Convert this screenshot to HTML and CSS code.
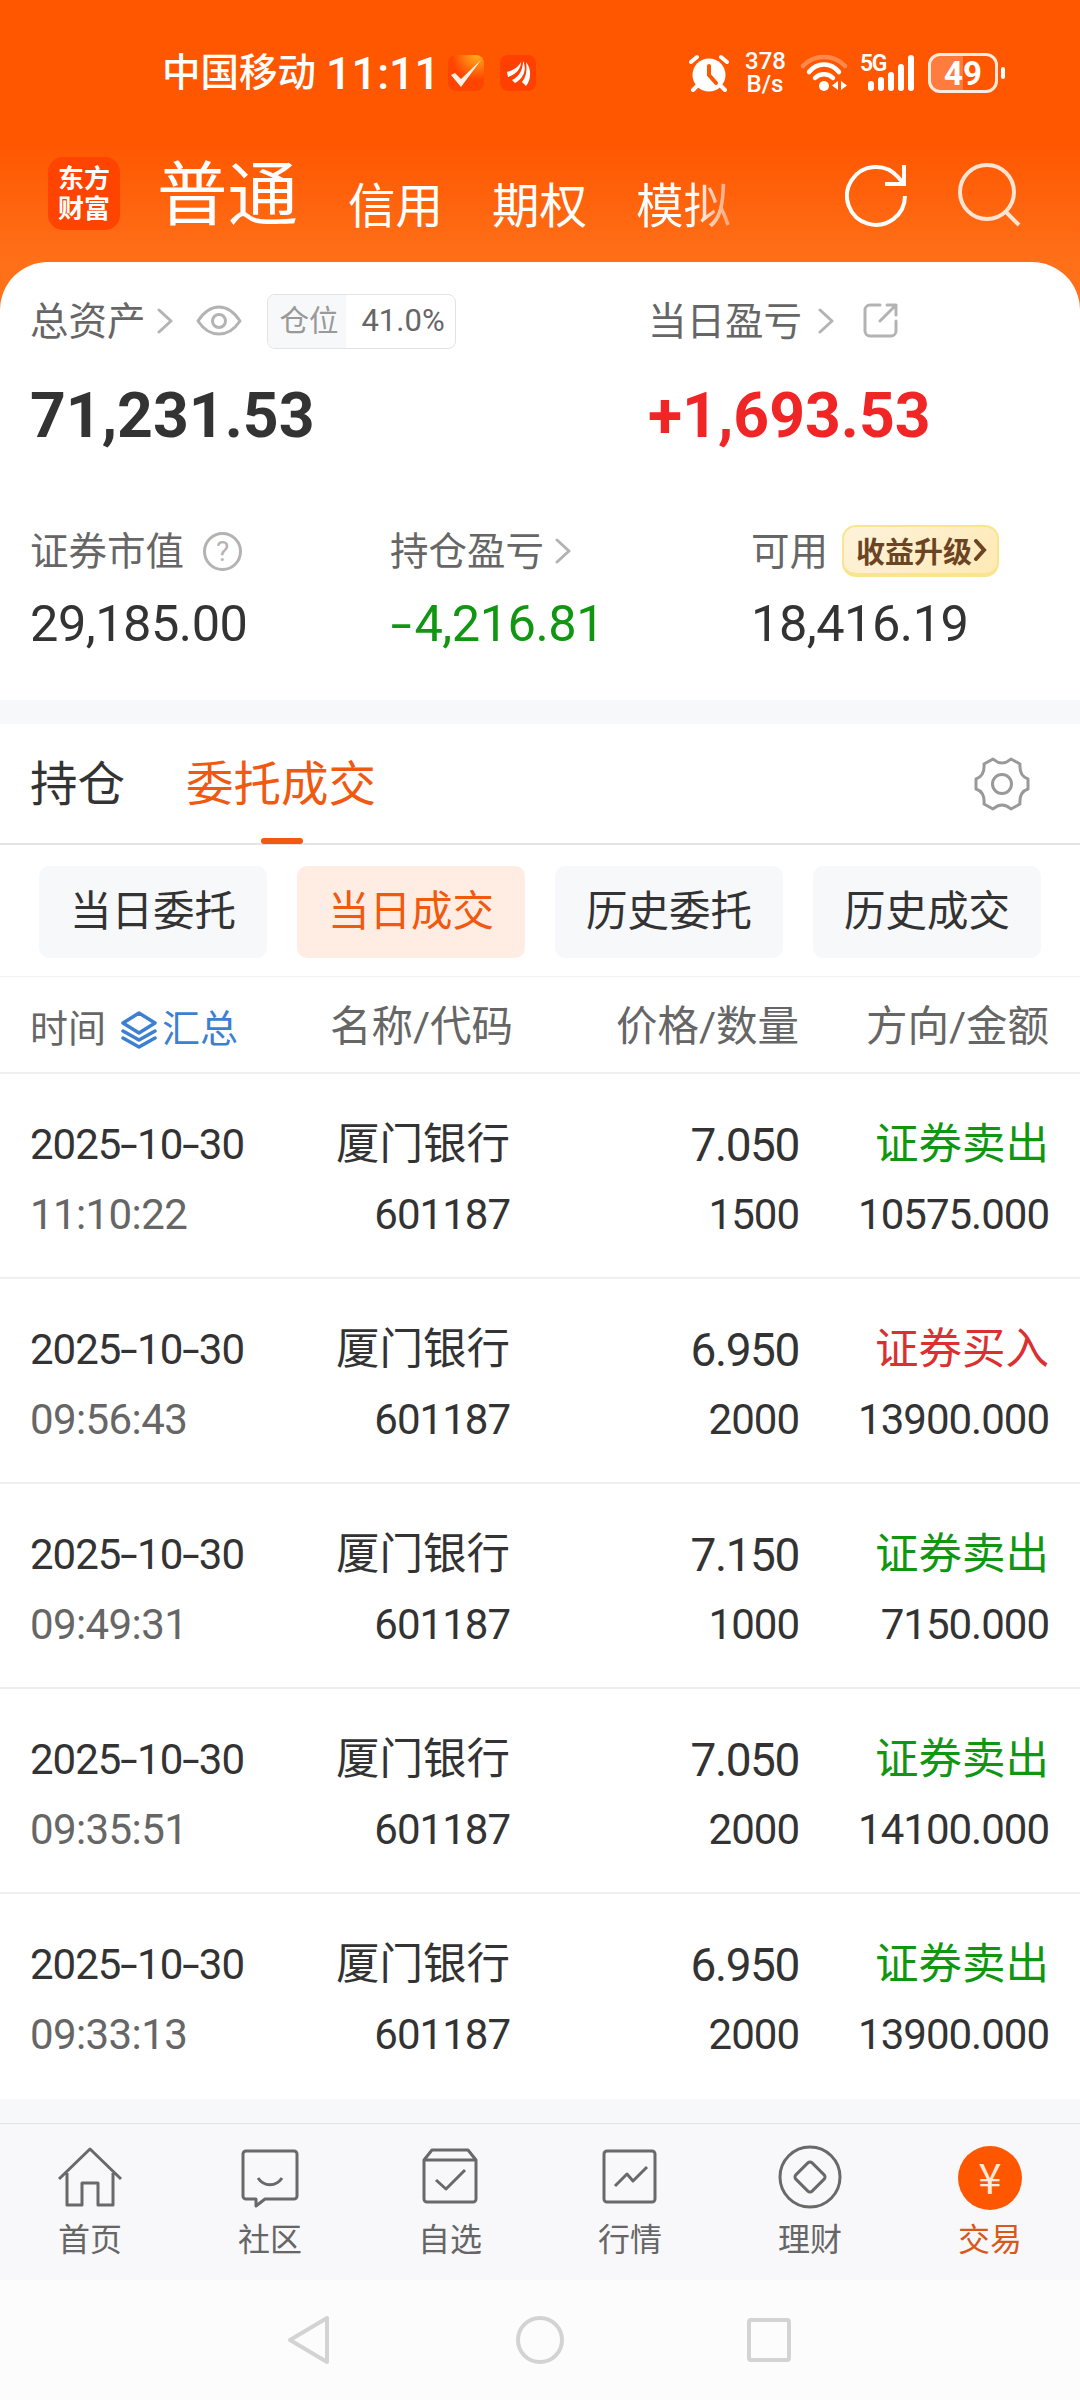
FILE: index.html
```html
<!DOCTYPE html>
<html lang="zh-CN">
  <head>
    <meta charset="UTF-8" />
    <meta name="viewport" content="width=device-width, initial-scale=1.0" />
    <title>交易</title>
    <link rel="stylesheet" href="styles.css">
  </head>
  <body>
    <div class="top">
      <div class="status">
        <span class="carrier">中国移动</span>
        <span class="clock">11:11</span>
        <svg class="app-check" width="36" height="36" viewBox="0 0 36 36">
          <defs>
            <radialGradient id="glow" cx="0.8" cy="0" r="0.7">
              <stop offset="0" stop-color="#ffb01c" />
              <stop offset="1" stop-color="#ff4400" />
            </radialGradient>
          </defs>
          <rect width="36" height="36" rx="8" fill="url(#glow)" />
          <path d="M3 20l4-2 6 6L33 5 13 32z" fill="#fff0e8" />
        </svg>
        <svg class="app-wing" width="36" height="36" viewBox="0 0 36 36">
          <rect width="36" height="36" rx="8" fill="#ff4000" />
          <path d="M7 17C14 15 18 12 21 7c0 6-4 12-13 15zM12 25C19 22 23 15 23 6c4 8 1 17-8 22zM22 27c5-6 5-14 4-20 6 7 5 18 0 24z" fill="#fff" />
        </svg>
        <span class="space"></span>
        <svg class="alarm" width="40" height="38" viewBox="0 0 40 38">
          <circle cx="20" cy="21" r="16.500" fill="#fff" />
          <path d="M2 8l6-5M38 8l-6-5M8 32l-4 4M32 32l4 4" stroke="#fff" stroke-width="4" stroke-linecap="round" />
          <path d="M20 12v9l7 8" fill="none" stroke="#ff5600" stroke-width="4" stroke-linecap="round" />
        </svg>
        <div class="speed"><p>378</p><p>B/s</p></div>
        <svg class="wifi" width="48" height="38" viewBox="0 0 48 38">
          <g fill="none" stroke="#fff" stroke-width="4.500" stroke-linecap="round">
            <path d="M3 12c11-12 31-12 42 0" opacity="0.300" />
            <path d="M9 18c8-10 22-10 30 0" />
            <path d="M15 24c5-5 13-5 18 0" />
          </g>
          <circle cx="24" cy="32" r="5" fill="#fff" />
          <path d="M38 27v9l-6-4.500zM41 27v9l6-4.500z" fill="#fff" />
        </svg>
        <div class="signal">
          <span>5G</span>
          <svg width="54" height="38" viewBox="0 0 54 38">
            <path d="M11 30v4M21 26v8M31 21v13M41 13v21M51 4v30" stroke="#fff" stroke-width="6" stroke-linecap="round" />
          </svg>
        </div>
        <div class="battery"><span>49</span></div>
        <i class="nub"></i>
      </div>

      <div class="nav">
        <div class="logo">东方<br>财富</div>
        <span class="current">普通</span>
        <span class="mode credit">信用</span>
        <span class="mode option">期权</span>
        <span class="mode mock">模拟</span>
        <span class="space"></span>
        <svg class="refresh" width="64" height="66" viewBox="0 0 64 66" fill="none" stroke="#fff" stroke-width="4">
          <path d="M60 34a29 29 0 1 1-7-19l6 7" />
          <path d="M59 3v19H40" />
        </svg>
        <svg width="64" height="66" viewBox="0 0 64 66" fill="none" stroke="#ffe3d3" stroke-width="4">
          <circle cx="29" cy="30" r="27" />
          <path d="M47 49l14 14" />
        </svg>
      </div>
    </div>

    <div class="assets">
      <div class="totals">
        <div class="total">
          <div class="label">
            总资产
            <svg class="arrow" width="16" height="26" viewBox="0 0 16 26"><path d="M2 2l12 11L2 24" /></svg>
            <svg class="eye" width="46" height="34" viewBox="0 0 46 34">
              <path d="M2 17C8 8 15 3 23 3s15 5 21 14c-6 9-13 13-21 13S8 26 2 17z" />
              <circle cx="23" cy="17" r="6.500" />
            </svg>
            <div class="position"><span>仓位</span><b>41.0%</b></div>
          </div>
          <div class="sum">71,231.53</div>
        </div>
        <div class="total">
          <div class="label">
            当日盈亏
            <svg class="arrow far" width="16" height="26" viewBox="0 0 16 26"><path d="M2 2l12 11L2 24" /></svg>
            <svg class="share" width="36" height="36" viewBox="0 0 36 36">
              <path d="M17 2H7a5 5 0 0 0-5 5v21a5 5 0 0 0 5 5h21a5 5 0 0 0 5-5V18M24 2h9v10M33 2L17 18" />
            </svg>
          </div>
          <div class="sum red">+1,693.53</div>
        </div>
      </div>

      <div class="figures">
        <div class="figure">
          <div class="label">证券市值<span class="help">?</span></div>
          <div class="value">29,185.00</div>
        </div>
        <div class="figure">
          <div class="label">
            持仓盈亏
            <svg class="arrow" width="16" height="26" viewBox="0 0 16 26"><path d="M2 2l12 11L2 24" /></svg>
          </div>
          <div class="value green"><i class="dash">-</i>4,216.81</div>
        </div>
        <div class="figure">
          <div class="label">
            可用
            <div class="upgrade">
              收益升级
              <svg width="14" height="22" viewBox="0 0 14 22"><path d="M3 2l8 9-8 9" fill="none" stroke="#6b4423" stroke-width="4" stroke-linecap="round" /></svg>
            </div>
          </div>
          <div class="value">18,416.19</div>
        </div>
      </div>
    </div>

    <div class="orders">
      <div class="tabs">
        <span class="tab">持仓</span>
        <span class="tab active">委托成交</span>
        <svg class="gear" width="58" height="58" viewBox="0 0 58 58" fill="none" stroke="#999" stroke-width="3" stroke-linejoin="round">
          <path d="M20 4q9 8 18 0l9 5q-1 12 8 15v10q-9 3-8 15l-9 5q-9-8-18 0l-9-5q1-12-8-15V24q9-3 8-15z" />
          <circle cx="29" cy="29" r="9.500" />
        </svg>
      </div>

      <div class="filters">
        <span>当日委托</span>
        <span class="active">当日成交</span>
        <span>历史委托</span>
        <span>历史成交</span>
      </div>

      <div class="row head">
        <div class="when">
          时间
          <svg width="38" height="40" viewBox="0 0 38 40" fill="none" stroke="#3d7fd1" stroke-width="3.500" stroke-linejoin="round" stroke-linecap="round">
            <path d="M19 3l16 10-16 10L3 13zM3 21l16 9 16-9M3 28l16 9 16-9" />
          </svg>
          <span>汇总</span>
        </div>
        <div class="code">名称/代码</div>
        <div>价格/数量</div>
        <div>方向/金额</div>
      </div>

      <div class="row">
        <div><p class="date">2025<i class="dash">-</i>10<i class="dash">-</i>30</p><p class="time">11:10:22</p></div>
        <div><p class="name">厦门银行</p><p>601187</p></div>
        <div><p class="price">7.050</p><p>1500</p></div>
        <div><p class="name green">证券卖出</p><p>10575.000</p></div>
      </div>
      <div class="row">
        <div><p class="date">2025<i class="dash">-</i>10<i class="dash">-</i>30</p><p class="time">09:56:43</p></div>
        <div><p class="name">厦门银行</p><p>601187</p></div>
        <div><p class="price">6.950</p><p>2000</p></div>
        <div><p class="name buy">证券买入</p><p>13900.000</p></div>
      </div>
      <div class="row">
        <div><p class="date">2025<i class="dash">-</i>10<i class="dash">-</i>30</p><p class="time">09:49:31</p></div>
        <div><p class="name">厦门银行</p><p>601187</p></div>
        <div><p class="price">7.150</p><p>1000</p></div>
        <div><p class="name green">证券卖出</p><p>7150.000</p></div>
      </div>
      <div class="row">
        <div><p class="date">2025<i class="dash">-</i>10<i class="dash">-</i>30</p><p class="time">09:35:51</p></div>
        <div><p class="name">厦门银行</p><p>601187</p></div>
        <div><p class="price">7.050</p><p>2000</p></div>
        <div><p class="name green">证券卖出</p><p>14100.000</p></div>
      </div>
      <div class="row">
        <div><p class="date">2025<i class="dash">-</i>10<i class="dash">-</i>30</p><p class="time">09:33:13</p></div>
        <div><p class="name">厦门银行</p><p>601187</p></div>
        <div><p class="price">6.950</p><p>2000</p></div>
        <div><p class="name green">证券卖出</p><p>13900.000</p></div>
      </div>
    </div>

    <div class="menu">
      <div class="item">
        <svg width="66" height="66" viewBox="0 0 66 66">
          <path d="M2 34L33 4l31 30M10 28v32h15V38h16v22h15V28" />
        </svg>
        首页
      </div>
      <div class="item">
        <svg width="66" height="66" viewBox="0 0 66 66">
          <path d="M9 6h48a3 3 0 0 1 3 3v42a3 3 0 0 1-3 3H28l-9 7v-7H9a3 3 0 0 1-3-3V9a3 3 0 0 1 3-3zM21 33c6 9 18 9 24 0" />
        </svg>
        社区
      </div>
      <div class="item">
        <svg width="66" height="66" viewBox="0 0 66 66">
          <path d="M7 15v39a3 3 0 0 0 3 3h46a3 3 0 0 0 3-3V15l-8-10H15zM7 15h52M19 35l10 9 19-19" />
        </svg>
        自选
      </div>
      <div class="item">
        <svg width="66" height="66" viewBox="0 0 66 66">
          <rect x="7" y="6" width="51" height="51" rx="3" />
          <path d="M18 41l12-12 6 7 14-14" />
        </svg>
        行情
      </div>
      <div class="item">
        <svg width="66" height="66" viewBox="0 0 66 66">
          <circle cx="33" cy="32" r="30" />
          <rect x="21.500" y="20.500" width="23" height="23" rx="3" transform="rotate(45 33 32)" />
        </svg>
        理财
      </div>
      <div class="item active">
        <span class="coin">¥</span>
        交易
      </div>
    </div>

    <div class="keys">
      <svg width="50" height="50" viewBox="0 0 50 50"><path d="M41 3v44L4 25z" /></svg>
      <svg width="50" height="50" viewBox="0 0 50 50"><circle cx="25" cy="25" r="22" /></svg>
      <svg width="50" height="50" viewBox="0 0 50 50"><rect x="5" y="5" width="40" height="40" rx="2" /></svg>
    </div>
  </body>
</html>
```
FILE: styles.css
```css
* {
  margin: 0;
  padding: 0;
  box-sizing: border-box;
}

body {
  width: 1080px;
  height: 2400px;
  display: flex;
  flex-direction: column;
  background: #f7f8fa;
  color: #333;
  font-family: Roboto, "Noto Sans CJK SC", sans-serif;
  overflow: hidden;
}

svg {
  flex: none;
}

.space {
  flex: 1;
}

.red {
  color: #f02626;
}

.green {
  color: #109610;
}

.buy {
  color: #dc3030;
}

/* the dash is drawn wider than the font has it */
.dash {
  display: inline-block;
  font-style: normal;
  transform: scaleX(1.5);
  margin: 0 3px;
}

/* Orange header */
.top {
  height: 310px;
  background: linear-gradient(#ff5600 140px, #ff7019 262px);
  color: #fff;
}

.status {
  height: 140px;
  padding: 6px 81px 0 162px;
  display: flex;
  align-items: center;
}

.carrier {
  font-size: 38.5px;
  font-weight: 500;
  line-height: 60px;
}

.clock {
  flex: none;
  margin-left: 10px;
  width: 122px;
  font-size: 45px;
  font-weight: 500;
  white-space: nowrap;
}

.app-wing {
  margin-left: 16px;
}

.speed {
  width: 40px;
  margin: 0 15px 0 16px;
  font-size: 24px;
  font-weight: 500;
  line-height: 23px;
  text-align: center;
}

.speed p {
  height: 23px;
}

.signal {
  position: relative;
  margin: 0 14px 0 12px;
  height: 38px;
}

.signal span {
  position: absolute;
  left: 0;
  top: -1px;
  font-size: 23px;
  font-weight: 600;
  line-height: 22px;
  letter-spacing: -1.5px;
}

.battery {
  width: 70px;
  height: 40px;
  border: 3px solid #ffeadd;
  border-radius: 12px;
  background: linear-gradient(90deg, #ff7c3e 50%, transparent 50%);
  text-align: center;
}

.battery span {
  font-size: 33px;
  font-weight: 700;
  line-height: 35px;
}

.nub {
  width: 4px;
  height: 12px;
  margin-left: 3px;
  margin-right: -6px;
  border-radius: 2px;
  background: #fff;
}

.nav {
  height: 122px;
  padding: 0 58px 13px 48px;
  display: flex;
  align-items: center;
}

.logo {
  width: 72px;
  height: 73px;
  margin-bottom: 2px;
  padding-top: 7px;
  border-radius: 15px;
  background: #ff4400;
  font-size: 26px;
  font-weight: 700;
  line-height: 30px;
  text-align: center;
}

.current {
  margin-left: 37px;
  margin-top: 2px;
  font-size: 70.5px;
  line-height: 80px;
}

.mode {
  font-size: 47.5px;
  line-height: 60px;
  margin-top: 24px;
}

.credit {
  margin-left: 50px;
}

.option,
.mock {
  margin-left: 49px;
}

.mock {
  background: linear-gradient(90deg, #fff 60%, #ffa070);
  background-clip: text;
  color: transparent;
}

.refresh {
  margin-right: 49px;
}

/* Assets */
.assets {
  height: 438px;
  margin-top: -48px;
  padding: 28px 0 0 30px;
  border-radius: 48px 48px 0 0;
  background: #fff;
}

.totals {
  display: grid;
  grid-template-columns: 618px 1fr;
  height: 230px;
}

.label {
  display: flex;
  align-items: center;
  height: 60px;
  padding-bottom: 5px;
  color: #666;
  font-size: 38.5px;
}

.label > * {
  margin-top: 7px;
}

.arrow {
  margin-left: 11px;
}

.far {
  margin-left: 16px;
}

.arrow path,
.eye *,
.share path {
  fill: none;
  stroke: #b3b3b3;
  stroke-width: 3;
  stroke-linecap: round;
  stroke-linejoin: round;
}

.eye {
  margin-left: 23px;
}

.share {
  margin-left: 29px;
}

.position {
  display: flex;
  width: 189px;
  height: 55px;
  margin-left: 25px;
  border: 1px solid #e3e3e3;
  border-radius: 8px;
  overflow: hidden;
  line-height: 52px;
}

.position span {
  width: 78px;
  padding-left: 12px;
  background: #f7f8fa;
  color: #999;
  font-size: 29.5px;
}

.position b {
  flex: 1;
  padding-left: 6px;
  text-align: center;
  font-size: 31px;
  font-weight: 400;
}

.sum {
  margin-top: 24px;
  font-size: 62.5px;
  font-weight: 700;
  line-height: 84px;
}

.figures {
  display: grid;
  grid-template-columns: 360px 361px 1fr;
}

.help {
  width: 39px;
  height: 39px;
  margin-left: 19px;
  border: 3px solid #b3b3b3;
  border-radius: 50%;
  color: #b3b3b3;
  font-size: 28px;
  line-height: 34px;
  text-align: center;
}

.upgrade {
  display: flex;
  align-items: center;
  width: 157px;
  height: 52px;
  margin-left: 14px;
  padding-left: 12px;
  border: 2px solid #fae58f;
  border-bottom-width: 4px;
  border-radius: 14px;
  background: linear-gradient(135deg, #fdf3dc, #ffe9b5);
  color: #6b4423;
  font-size: 29px;
  font-weight: 700;
  white-space: nowrap;
}

.upgrade svg {
  margin-left: 1px;
}

.value {
  margin-top: 6px;
  font-size: 50.5px;
  line-height: 76px;
  letter-spacing: -0.5px;
}

.value .dash {
  margin: 0 7px 0 4px;
}

/* Orders */
.orders {
  margin-top: 24px;
  background: #fff;
}

.tabs {
  display: flex;
  align-items: center;
  height: 121px;
  padding: 0 49px 0 30px;
  border-bottom: 2px solid #e4e4e4;
}

.tab {
  position: relative;
  height: 120px;
  margin-right: 61px;
  font-size: 47.5px;
  line-height: 122px;
}

.tab.active {
  color: #f0590f;
}

.tab.active::after {
  content: "";
  position: absolute;
  left: 75px;
  bottom: 0;
  width: 42px;
  height: 6px;
  border-radius: 3px;
  background: #f0590f;
}

.gear {
  margin-left: auto;
}

.filters {
  display: grid;
  grid-template-columns: repeat(4, 1fr);
  gap: 30px;
  height: 132px;
  padding: 21px 39px 20px;
  border-bottom: 1px solid #f2f2f2;
}

.filters span {
  border-radius: 10px;
  background: #f7f8fa;
  font-size: 41.5px;
  line-height: 92px;
  text-align: center;
}

.filters .active {
  background: #ffede4;
  color: #f0590f;
}

.row {
  display: grid;
  grid-template-columns: 251px 229px 289px 250px;
  height: 205px;
  padding: 36px 31px 0 30px;
  border-bottom: 2px solid #efefef;
  font-size: 42px;
  letter-spacing: -1px;
  line-height: 70px;
  text-align: right;
}

.row:last-child {
  border-bottom: 0;
}

.row > :first-child {
  text-align: left;
}

.row p {
  height: 70px;
}

.head {
  height: 97px;
  padding-top: 15px;
  color: #666;
  font-size: 41.5px;
  letter-spacing: 0;
}

.head .when {
  display: flex;
  align-items: center;
  height: 70px;
  padding-top: 3px;
  font-size: 38px;
}

.head svg {
  margin: 2px 4px 0 14px;
}

.head .when span {
  color: #3d7fd1;
}

.head .code {
  margin-right: -3px;
}

.time {
  color: #666;
  letter-spacing: -0.6px;
}

.name {
  font-size: 43.5px;
  letter-spacing: 0;
}

.price {
  font-size: 46px;
  letter-spacing: -1.4px;
}

/* Bottom menu */
.menu {
  display: grid;
  grid-template-columns: repeat(6, 1fr);
  height: 157px;
  margin-top: auto;
  padding-top: 21px;
  border-top: 1px solid #e2e3e5;
  background: #f8f8fa;
}

.item {
  display: flex;
  flex-direction: column;
  align-items: center;
  color: #666;
  font-size: 32px;
  line-height: 59px;
}

.item svg {
  fill: none;
  stroke: #696969;
  stroke-width: 3;
  stroke-linejoin: round;
}

.item.active {
  color: #d9591c;
}

.coin {
  width: 64px;
  height: 64px;
  margin: 1px 0;
  border-radius: 50%;
  background: #ff5600;
  color: #ffeadd;
  font-family: "Noto Sans CJK SC", sans-serif;
  font-size: 42px;
  line-height: 60px;
  text-align: center;
}

.keys {
  display: flex;
  justify-content: center;
  align-items: center;
  gap: 179px;
  height: 120px;
  background: #fcfcfc;
}

.keys svg {
  fill: none;
  stroke: #d3d3d3;
  stroke-width: 4;
  stroke-linejoin: round;
}
```
